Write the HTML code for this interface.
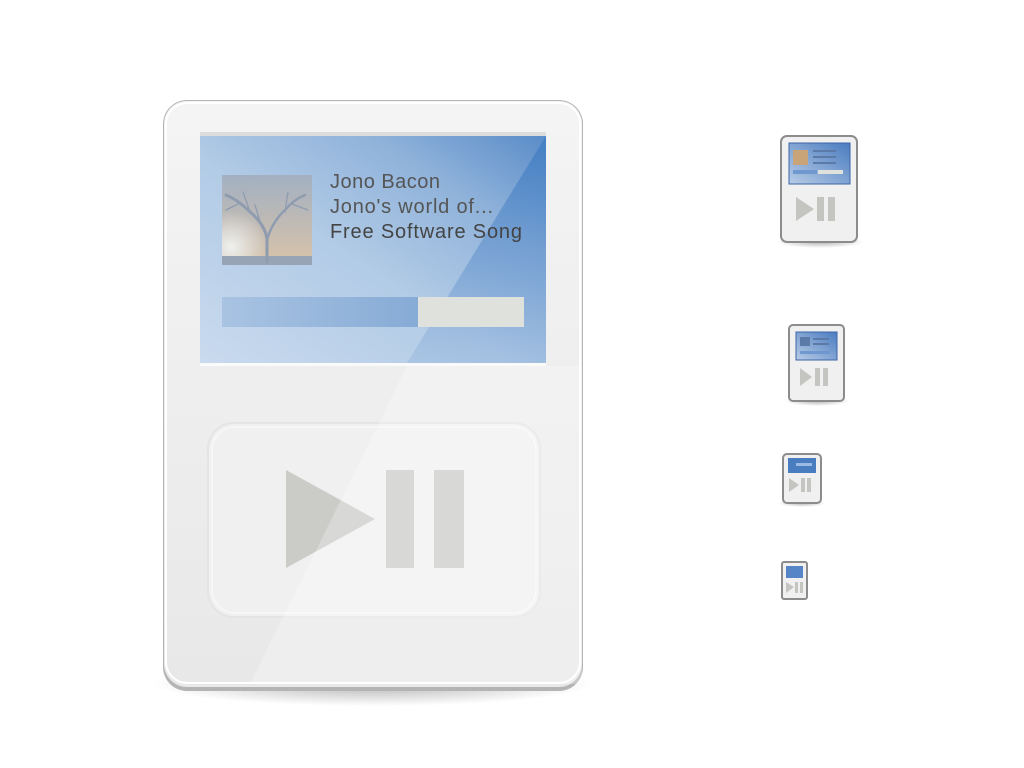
<!DOCTYPE html>
<html><head><meta charset="utf-8"><style>
html,body{margin:0;padding:0;background:#fff;width:1024px;height:768px;overflow:hidden}
</style></head><body>
<svg width="1024" height="768" viewBox="0 0 1024 768" xmlns="http://www.w3.org/2000/svg">
<defs>
<linearGradient id="body" x1="0" y1="0" x2="0" y2="1">
<stop offset="0" stop-color="#f4f4f4"/><stop offset="1" stop-color="#e8e8e8"/></linearGradient>
<linearGradient id="scr" x1="0" y1="1" x2="1" y2="0">
<stop offset="0" stop-color="#c9daee"/><stop offset="0.45" stop-color="#b2cbe6"/><stop offset="0.75" stop-color="#8fb2da"/><stop offset="1" stop-color="#5a8cc8"/></linearGradient>
<linearGradient id="scr2" x1="0" y1="0" x2="0" y2="1">
<stop offset="0" stop-color="#3f7cc2" stop-opacity="0.8"/><stop offset="1" stop-color="#6f9ad0" stop-opacity="0.2"/></linearGradient>
<linearGradient id="art" x1="0" y1="0" x2="0" y2="1">
<stop offset="0" stop-color="#a3b0c2"/><stop offset="1" stop-color="#d8c3a8"/></linearGradient>
<linearGradient id="prog" x1="0" y1="0" x2="1" y2="0">
<stop offset="0" stop-color="#a9c3e2"/><stop offset="1" stop-color="#86abd6"/></linearGradient>
<radialGradient id="shadow" cx="0.5" cy="0.5" r="0.5">
<stop offset="0" stop-color="#000" stop-opacity="0.3"/><stop offset="1" stop-color="#000" stop-opacity="0"/></radialGradient>
<radialGradient id="sun" cx="0.1" cy="0.8" r="0.4">
<stop offset="0" stop-color="#eef0ee"/><stop offset="1" stop-color="#eef0ee" stop-opacity="0"/></radialGradient>
<linearGradient id="sscr" x1="0" y1="1" x2="1" y2="0">
<stop offset="0" stop-color="#b8cce6"/><stop offset="1" stop-color="#4a7cc0"/></linearGradient>
<clipPath id="bclip"><rect x="164" y="366" width="418" height="321" rx="0"/></clipPath>
</defs>

<ellipse cx="373" cy="684" rx="220" ry="22" fill="url(#shadow)"/>
<rect x="163" y="100" width="420" height="591" rx="24" fill="#b4b4b4"/>
<rect x="164" y="101" width="418" height="586" rx="23" fill="url(#body)"/>
<rect x="166" y="103" width="414" height="580" rx="21" fill="none" stroke="#fff" stroke-width="2"/>
<rect x="200" y="132" width="346" height="4" fill="#dcdcdc"/>
<rect x="200" y="136" width="346" height="227" fill="url(#scr)"/>
<path d="M546 136 L546 363 L407 363 Z" fill="url(#scr2)"/>
<rect x="200" y="363" width="346" height="3" fill="#fafafa"/>
<!-- album art -->
<rect x="222" y="175" width="90" height="90" fill="url(#art)"/>
<rect x="222" y="175" width="90" height="90" fill="url(#sun)"/>
<rect x="222" y="256" width="90" height="9" fill="#97a4b6"/>
<g stroke="#8f9cb0" fill="none" stroke-linecap="round">
<path d="M267 262 L267 240 Q266 225 248 210 Q238 200 226 195" stroke-width="3"/>
<path d="M267 240 Q272 222 285 210 Q293 200 305 195" stroke-width="2.5"/>
<path d="M250 212 L243 192 M240 203 L226 210 M285 212 L288 192 M292 204 L308 210 M262 228 L255 205" stroke-width="1.3"/>
</g>
<g font-family="Liberation Sans, sans-serif" font-size="20" fill="#555">
<text x="330" y="188" textLength="110" lengthAdjust="spacing">Jono Bacon</text>
<text x="330" y="213" textLength="163" lengthAdjust="spacing">Jono's world of...</text>
<text x="330" y="238" fill="#444" textLength="192" lengthAdjust="spacing">Free Software Song</text>
</g>
<rect x="222" y="297" width="196" height="30" fill="url(#prog)"/>
<rect x="418" y="297" width="106" height="30" fill="#dfe1dd"/>
<!-- button -->
<rect x="208" y="423" width="332" height="194" rx="26" fill="#f0f0f0" stroke="#e4e4e4" stroke-width="2"/>
<rect x="212" y="427" width="324" height="186" rx="23" fill="none" stroke="#f8f8f8" stroke-width="1.5"/>
<path d="M286 470 L375 519 L286 568 Z" fill="#cbcbc8"/>
<rect x="386" y="470" width="28" height="98" fill="#cbcbc8"/>
<rect x="434" y="470" width="30" height="98" fill="#cbcbc8"/>
<!-- glossy diagonal -->
<g clip-path="url(#bclip)">
<path d="M407 366 L600 366 L600 684 L250 684 Z" fill="#fff" opacity="0.25"/>
</g>

<!-- small icon 1 -->
<ellipse cx="820" cy="242" rx="44" ry="6" fill="url(#shadow)"/>
<rect x="781" y="136" width="76" height="106" rx="6" fill="#f0f0f0" stroke="#8c8c8c" stroke-width="2"/>
<rect x="789" y="143" width="61" height="41" fill="url(#sscr)" stroke="#3d64a8" stroke-width="1"/>
<rect x="793" y="150" width="15" height="15" fill="#c9a478"/>
<rect x="813" y="150" width="23" height="2" fill="#5b7aa8"/>
<rect x="813" y="156" width="23" height="2" fill="#5b7aa8"/>
<rect x="813" y="162" width="23" height="2" fill="#5b7aa8"/>
<rect x="793" y="170" width="24" height="4" fill="#6f98d0"/>
<rect x="818" y="170" width="25" height="4" fill="#dfe1dd"/>
<path d="M796 197 L814 209 L796 221 Z" fill="#c4c4c0"/>
<rect x="817" y="197" width="7" height="24" fill="#c4c4c0"/>
<rect x="828" y="197" width="7" height="24" fill="#c4c4c0"/>

<!-- small icon 2 -->
<ellipse cx="817" cy="401" rx="32" ry="5" fill="url(#shadow)"/>
<rect x="789" y="325" width="55" height="76" rx="4" fill="#f0f0f0" stroke="#8c8c8c" stroke-width="2"/>
<rect x="796" y="332" width="41" height="28" fill="url(#sscr)" stroke="#3d64a8" stroke-width="1"/>
<rect x="800" y="337" width="10" height="9" fill="#5b7aa8"/>
<rect x="813" y="338" width="16" height="2" fill="#5b7aa8"/>
<rect x="813" y="343" width="16" height="2" fill="#5b7aa8"/>
<rect x="800" y="351" width="30" height="3" fill="#6f98d0"/>
<path d="M800 368 L812 377 L800 386 Z" fill="#c4c4c0"/>
<rect x="815" y="368" width="5" height="18" fill="#c4c4c0"/>
<rect x="823" y="368" width="5" height="18" fill="#c4c4c0"/>

<!-- small icon 3 -->
<ellipse cx="802" cy="503" rx="24" ry="4" fill="url(#shadow)"/>
<rect x="783" y="454" width="38" height="49" rx="4" fill="#f0f0f0" stroke="#8c8c8c" stroke-width="2"/>
<rect x="788" y="458" width="28" height="15" fill="#4a7cc0"/>
<rect x="796" y="463" width="16" height="3" fill="#9cbbe3"/>
<path d="M789 478 L799 485 L789 492 Z" fill="#c4c4c0"/>
<rect x="801" y="478" width="4" height="14" fill="#c4c4c0"/>
<rect x="807" y="478" width="4" height="14" fill="#c4c4c0"/>

<!-- small icon 4 -->
<rect x="782" y="562" width="25" height="37" rx="2" fill="#f0f0f0" stroke="#8c8c8c" stroke-width="2"/>
<rect x="786" y="566" width="17" height="12" fill="#5585c6"/>
<path d="M786 582 L794 587 L786 593 Z" fill="#c4c4c0"/>
<rect x="795" y="582" width="3" height="11" fill="#c4c4c0"/>
<rect x="800" y="582" width="3" height="11" fill="#c4c4c0"/>
</svg>
</body></html>
